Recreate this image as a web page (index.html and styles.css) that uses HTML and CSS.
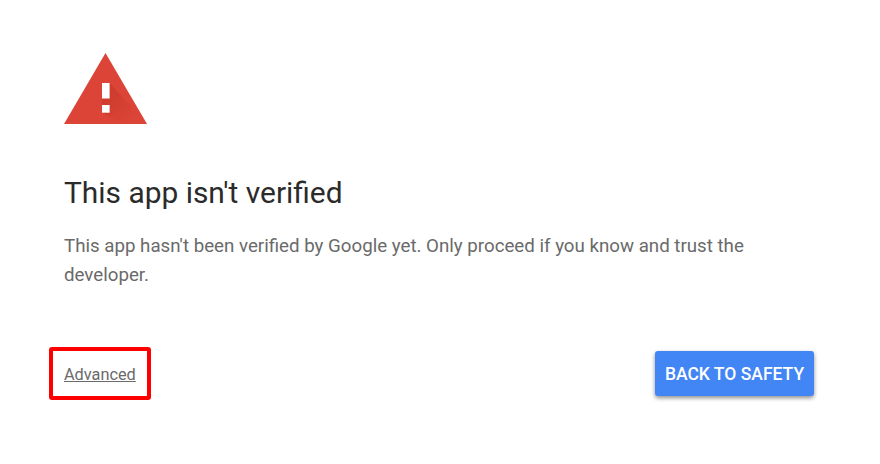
FILE: index.html
```html
<!DOCTYPE html>
<html lang="en">
<head>
<meta charset="utf-8">
<title>This app isn't verified</title>
<link rel="stylesheet" href="styles.css">
</head>
<body>
<main class="page">
  <svg class="warn" width="84" height="72" viewBox="0 0 84 72" aria-hidden="true">
    <defs>
      <linearGradient id="warn-shadow" x1="0.2" y1="0.1" x2="0.85" y2="0.9">
        <stop offset="0" stop-color="#a52714" stop-opacity="0.3"/>
        <stop offset="1" stop-color="#a52714" stop-opacity="0"/>
      </linearGradient>
    </defs>
    <polygon points="41.5,0 83,71 0,71" fill="#db4437"/>
    <polygon points="45.6,30 66,52 72,71 60,71 38,59.7 38,45.5 45.6,45.5" fill="url(#warn-shadow)"/>
    <rect x="38" y="30" width="7.6" height="15.5" fill="#fff"/>
    <rect x="38" y="52" width="7.6" height="7.7" fill="#fff"/>
  </svg>
  <h1 class="title">This app isn't verified</h1>
  <p class="body">This app hasn't been verified by Google yet. Only proceed if you know and trust the developer.</p>
  <div class="actions">
    <span class="adv-box"><a class="adv" href="#">Advanced</a></span>
    <button class="back" type="button">BACK TO SAFETY</button>
  </div>
</main>
</body>
</html>
```
FILE: styles.css
```css
html, body { margin: 0; padding: 0; background: #fff; }
body { width: 880px; height: 464px; overflow: hidden; font-family: Roboto, sans-serif; }
.page { display: flex; flex-direction: column; align-items: flex-start; padding: 53px 66px 0 64px; }
.warn { display: block; margin-left: -0.5px; }
.title { margin: 50px 0 0; font-size: 29.9px; line-height: 36px; font-weight: 400; color: #2b2b2b; }
.body { margin: 21px 0 0; font-size: 18.72px; line-height: 29px; color: #6a6a6a; width: 720px; }
.actions { display: flex; justify-content: space-between; align-items: center; width: 100%; margin-top: 57px; }
.adv-box { display: flex; align-items: center; box-sizing: content-box; margin-left: -15px; padding: 2px 11px 0 11px; height: 43px; border: 4px solid #f00; border-radius: 3px; }
.adv { font-size: 16.3px; color: #6a6a6a; text-decoration: underline; }
.back { width: 159px; height: 45px; border: 0; border-radius: 3px; background: #4285f4; color: #fff; font: 500 17.5px Roboto, sans-serif; padding: 0; box-shadow: 0 2px 4px rgba(0,0,0,.45); }
```
